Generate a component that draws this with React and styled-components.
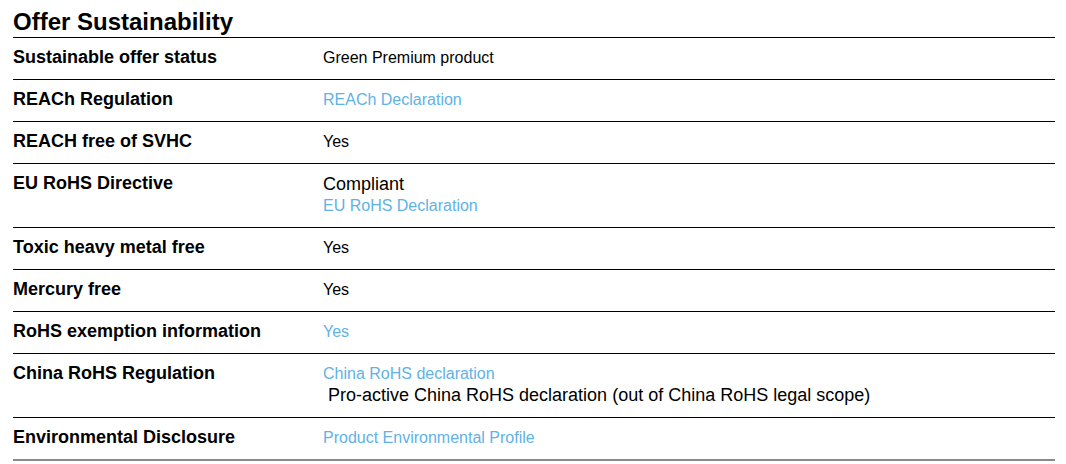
import styled, { createGlobalStyle } from "styled-components";

const GlobalStyle = createGlobalStyle`
  body {
    margin: 0;
    background: #ffffff;
    font-family: "Liberation Sans", Arial, sans-serif;
    color: #000000;
  }
`;

const rows = [
  { label: "Sustainable offer status", values: [{ text: "Green Premium product" }] },
  { label: "REACh Regulation", values: [{ text: "REACh Declaration", link: true }] },
  { label: "REACH free of SVHC", values: [{ text: "Yes" }] },
  {
    label: "EU RoHS Directive",
    values: [{ text: "Compliant", big: true }, { text: "EU RoHS Declaration", link: true }],
  },
  { label: "Toxic heavy metal free", values: [{ text: "Yes" }] },
  { label: "Mercury free", values: [{ text: "Yes" }] },
  { label: "RoHS exemption information", values: [{ text: "Yes", link: true }] },
  {
    label: "China RoHS Regulation",
    values: [
      { text: "China RoHS declaration", link: true },
      { text: "\u00a0Pro-active China RoHS declaration (out of China RoHS legal scope)", big: true },
    ],
  },
  {
    label: "Environmental Disclosure",
    values: [{ text: "Product Environmental Profile", link: true }],
    last: true,
  },
];

const App = () => {
  return (
    <>
      <GlobalStyle />
      <Section>
        <Title>Offer Sustainability</Title>
        {rows.map((row) => (
          <Row key={row.label} $last={row.last}>
            <Label>{row.label}</Label>
            <Values>
              {row.values.map((v) =>
                v.link ? (
                  <LinkText key={v.text} href="#">
                    {v.text}
                  </LinkText>
                ) : (
                  <ValueText key={v.text} $big={v.big}>
                    {v.text}
                  </ValueText>
                )
              )}
            </Values>
          </Row>
        ))}
      </Section>
    </>
  );
};
export default App;

const Section = styled.div`
  width: 1042px;
  margin-left: 13px;
`;

const Title = styled.h2`
  margin: 8px 0 0;
  padding-bottom: 1px;
  font-size: 24px;
  line-height: 28px;
  font-weight: bold;
  border-bottom: 1px solid #000;
`;

const Row = styled.div`
  display: grid;
  grid-template-columns: 310px 1fr;
  padding: 9px 0 11px;
  border-bottom: ${(p) => (p.$last ? "2px solid #8a8a8a" : "1px solid #000")};
`;

const Label = styled.div`
  font-size: 18px;
  line-height: 21px;
  font-weight: bold;
`;

const Values = styled.div`
  display: flex;
  flex-direction: column;
  align-items: flex-start;
`;

const ValueText = styled.span`
  font-size: ${(p) => (p.$big ? "18px" : "16px")};
  line-height: ${(p) => (p.$big ? "22px" : "21px")};
  white-space: pre;
`;

const LinkText = styled.a`
  font-size: 16px;
  line-height: 21px;
  color: #5fb2e6;
  text-decoration: none;
`;
